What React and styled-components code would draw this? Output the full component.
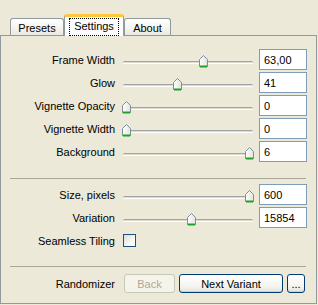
import styled, { createGlobalStyle } from 'styled-components'

const Global = createGlobalStyle`
  html, body {
    margin: 0;
    padding: 0;
    background: #ece9d8;
  }
  body {
    font-family: Tahoma, "Liberation Sans", Arial, sans-serif;
    font-size: 11px;
    color: #000;
  }
`

const sliders = [
  { label: 'Frame Width', pos: 0.626, value: '63,00' },
  { label: 'Glow', pos: 0.415, value: '41' },
  { label: 'Vignette Opacity', pos: 0, value: '0' },
  { label: 'Vignette Width', pos: 0, value: '0' },
  { label: 'Background', pos: 1, value: '6' },
]

const Thumb = ({ pos }) => (
  <ThumbWrap style={{ left: `${3 + pos * 123 - 4}px` }}>
    <svg width="9" height="13" viewBox="0 0 9 13">
      <defs>
        <linearGradient id="tg" x1="0" y1="0" x2="1" y2="0">
          <stop offset="0" stopColor="#ffffff" />
          <stop offset="1" stopColor="#e4e3dc" />
        </linearGradient>
      </defs>
      <path d="M0.5 4.5 L4.5 0.5 L8.5 4.5 V11.5 H0.5 Z" fill="url(#tg)" stroke="#7c8fa0" />
      <path d="M1 11.5 H8" stroke="#21a121" strokeWidth="2" />
      <path d="M0.5 10 V11.5 M8.5 10 V11.5" stroke="#43b943" />
    </svg>
  </ThumbWrap>
)

const Slider = ({ pos }) => (
  <Track>
    <Groove />
    <Thumb pos={pos} />
  </Track>
)

const App = () => {
  return (
    <>
      <Global />
      <Window>
        <TabBar>
          <Tab $w={54}>Presets</Tab>
          <Tab $w={60} $active><Focus>Settings</Focus></Tab>
          <Tab $w={47}>About</Tab>
        </TabBar>
        <Panel>
          <Rows>
            {sliders.map((s) => (
              <Row key={s.label}>
                <Label>{s.label}</Label>
                <Slider pos={s.pos} />
                <Field>{s.value}</Field>
              </Row>
            ))}
          </Rows>
          <Separator $top={16} $bottom={5} />
          <Rows>
            <Row>
              <Label>Size, pixels</Label>
              <Slider pos={1} />
              <Field>600</Field>
            </Row>
            <Row>
              <Label>Variation</Label>
              <Slider pos={0.53} />
              <Field>15854</Field>
            </Row>
            <Row>
              <Label>Seamless Tiling</Label>
              <Check />
            </Row>
          </Rows>
          <Separator $top={15} $bottom={7} />
          <ButtonRow>
            <Label>Randomizer</Label>
            <Buttons>
              <Button $w={51} disabled>Back</Button>
              <Button $w={104}>Next Variant</Button>
              <Button $w={18}>...</Button>
            </Buttons>
          </ButtonRow>
        </Panel>
      </Window>
    </>
  )
}

export default App

const Window = styled.div`
  width: 318px;
  height: 305px;
  display: flex;
  flex-direction: column;
  background: #ece9d8;
`

const TabBar = styled.div`
  height: 35px;
  display: flex;
  align-items: flex-end;
  padding-left: 10px;
  box-sizing: border-box;
`

const Tab = styled.div`
  box-sizing: border-box;
  width: ${(p) => p.$w}px;
  height: ${(p) => (p.$active ? '22px' : '17px')};
  margin-bottom: ${(p) => (p.$active ? '-1px' : '0')};
  padding-top: ${(p) => (p.$active ? '0' : '1px')};
  display: flex;
  align-items: center;
  justify-content: center;
  position: relative;
  z-index: ${(p) => (p.$active ? 1 : 0)};
  border: 1px solid #919b9c;
  border-bottom: none;
  border-top: ${(p) => (p.$active ? '3px solid #ffc83c' : '1px solid #919b9c')};
  border-radius: 3px 3px 0 0;
  background: ${(p) =>
    p.$active ? '#fcfcfe' : 'linear-gradient(#ffffff, #f4f3ee 60%, #e8e7e0)'};
`

const Focus = styled.span`
  border: 1px dotted #000;
  padding: 1px 4px 2px;
  line-height: 13px;
`

const Panel = styled.div`
  width: 317px;
  height: 269px;
  box-sizing: border-box;
  border: 1px solid #919b9c;
  padding-top: 13px;
  display: flex;
  flex-direction: column;
`

const Rows = styled.div`
  display: flex;
  flex-direction: column;
  gap: 2px;
`

const Row = styled.div`
  display: grid;
  grid-template-columns: 114px 130px 48px;
  column-gap: 8px;
  align-items: center;
  height: 21px;
  & > :nth-child(3) {
    margin-left: -2px;
  }
`

const Label = styled.div`
  text-align: right;
  white-space: nowrap;
`

const Track = styled.div`
  position: relative;
  height: 21px;
`

const Groove = styled.div`
  position: absolute;
  left: 0;
  right: 0;
  top: 12px;
  height: 3px;
  box-sizing: border-box;
  border-top: 1px solid #a5a49e;
  border-bottom: 1px solid #ffffff;
  background: #dcdad0;
  border-radius: 2px;
`

const ThumbWrap = styled.div`
  position: absolute;
  top: 6px;
  width: 9px;
  height: 13px;
  svg {
    display: block;
  }
`

const Field = styled.div`
  box-sizing: border-box;
  height: 21px;
  width: 48px;
  border: 1px solid #7f9db9;
  background: #fff;
  padding: 0 4px;
  display: flex;
  align-items: center;
`

const Check = styled.div`
  width: 13px;
  height: 13px;
  box-sizing: border-box;
  border: 1px solid #1c5180;
  background: linear-gradient(135deg, #dcdcd7, #fbfbf9 70%, #ffffff);
`

const Separator = styled.div`
  height: 1px;
  background: #aca899;
  margin: ${(p) => p.$top}px 10px ${(p) => p.$bottom}px 9px;
`

const ButtonRow = styled.div`
  display: grid;
  grid-template-columns: 114px auto;
  column-gap: 8px;
  align-items: center;
`

const Buttons = styled.div`
  display: flex;
  gap: 4px;
  & > :first-child {
    margin-left: 1px;
  }
`

const Button = styled.button`
  width: ${(p) => p.$w}px;
  height: 19px;
  padding: 0;
  font: inherit;
  color: #000;
  border: 1px solid #003c74;
  border-radius: 3px;
  background: linear-gradient(#ffffff, #f3f3ef 70%, #e3e2da);
  box-shadow: inset 0 -1px 0 #d6d0c5;
  &:disabled {
    color: #aca899;
    border-color: #c9c7ba;
    background: #f5f4ea;
    box-shadow: none;
  }
`
